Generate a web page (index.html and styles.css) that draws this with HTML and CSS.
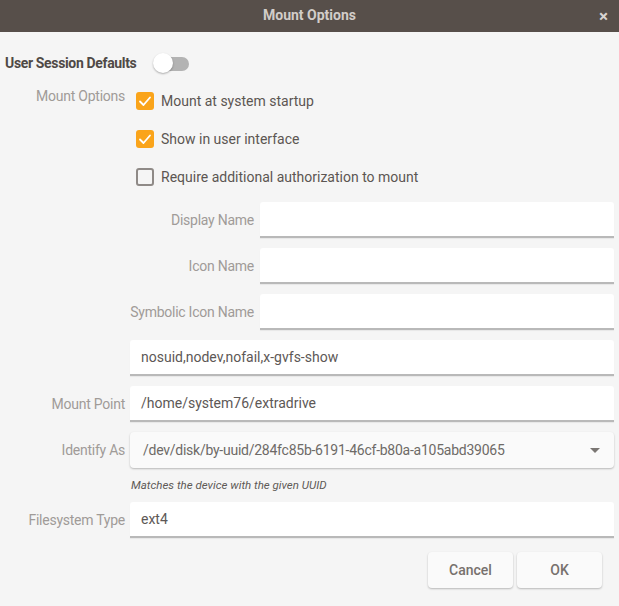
FILE: index.html
```html
<!DOCTYPE html>
<html>
<head>
<meta charset="utf-8">
<link rel="stylesheet" href="styles.css">
</head>
<body>
<div class="titlebar">
  <span class="title">Mount Options</span>
  <span class="close">×</span>
</div>
<div class="content">
  <div class="header">
    <span class="header-label">User Session Defaults</span>
    <span class="switch"><span class="knob"></span></span>
  </div>
  <div class="form">
    <div class="label label-top">Mount Options</div>
    <div class="checks">
      <div class="check-row"><span class="box on"><svg viewBox="0 0 18 18" width="18" height="18"><polyline points="4,9.5 7.5,13 14,5.5" fill="none" stroke="#fff" stroke-width="1.8" stroke-linecap="round" stroke-linejoin="round"/></svg></span><span class="check-text">Mount at system startup</span></div>
      <div class="check-row"><span class="box on"><svg viewBox="0 0 18 18" width="18" height="18"><polyline points="4,9.5 7.5,13 14,5.5" fill="none" stroke="#fff" stroke-width="1.8" stroke-linecap="round" stroke-linejoin="round"/></svg></span><span class="check-text">Show in user interface</span></div>
      <div class="check-row"><span class="box"></span><span class="check-text">Require additional authorization to mount</span></div>
      <div class="sub">
        <div class="label">Display Name</div><div class="field"></div>
        <div class="label">Icon Name</div><div class="field"></div>
        <div class="label">Symbolic Icon Name</div><div class="field"></div>
      </div>
    </div>
    <div class="label"></div><div class="field">nosuid,nodev,nofail,x-gvfs-show</div>
    <div class="label">Mount Point</div><div class="field">/home/system76/extradrive</div>
    <div class="label">Identify As</div>
    <div class="combo-wrap">
      <div class="combo"><span class="combo-text">/dev/disk/by-uuid/284fc85b-6191-46cf-b80a-a105abd39065</span><span class="arrow"></span></div>
      <div class="hint">Matches the device with the given UUID</div>
    </div>
    <div class="label">Filesystem Type</div><div class="field">ext4</div>
  </div>
  <div class="buttons">
    <button class="btn">Cancel</button>
    <button class="btn">OK</button>
  </div>
</div>
</body>
</html>
```
FILE: styles.css
```css
html, body {
  margin: 0;
  padding: 0;
}
body {
  background: #f5f5f5;
  font-family: Roboto, "Noto Sans", sans-serif;
  font-size: 14px;
  color: #5c5652;
  width: 619px;
  height: 606px;
  overflow: hidden;
}
.titlebar {
  height: 32px;
  background: #574f4a;
  display: flex;
  align-items: center;
  justify-content: center;
  position: relative;
}
.title {
  color: #d2cdc9;
  font-weight: 700;
  font-size: 14px;
  margin-top: -2px;
}
.close {
  position: absolute;
  right: 11px;
  top: 6px;
  color: #d8d4d1;
  font-size: 17px;
  font-weight: 700;
  line-height: 20px;
}
.content {
  padding: 0 5px;
}
.header {
  display: flex;
  align-items: center;
  height: 24px;
  margin-top: 19px;
}
.header-label {
  font-weight: 700;
  color: #4f4946;
  font-size: 14px;
  width: 148px;
  letter-spacing: -0.35px;
}
.switch {
  position: relative;
  width: 29px;
  height: 14px;
  border-radius: 7px;
  background: #b3b3b3;
  margin-left: 7px;
  margin-top: 2px;
}
.knob {
  position: absolute;
  left: -7px;
  top: -4px;
  width: 20px;
  height: 20px;
  border-radius: 50%;
  background: #fff;
  box-shadow: 0 1px 2px rgba(0,0,0,0.3);
}
.form {
  display: grid;
  grid-template-columns: 120px 1fr;
  column-gap: 5px;
  row-gap: 10px;
  margin-top: 14px;
}
.label {
  color: #a09b98;
  text-align: right;
  display: flex;
  align-items: center;
  justify-content: flex-end;
  height: 36px;
  white-space: nowrap;
  letter-spacing: -0.25px;
}
.label-top {
  height: 24px;
  align-items: flex-start;
  margin-top: -1px;
}
.checks {
  display: flex;
  flex-direction: column;
}
.check-row {
  display: flex;
  align-items: center;
  height: 24px;
  margin-bottom: 14px;
  padding-left: 6px;
}
.check-row:nth-child(3) {
  margin-bottom: 13px;
}
.box {
  width: 18px;
  height: 18px;
  box-sizing: border-box;
  border: 2px solid #8f8a87;
  border-radius: 3px;
  margin-right: 7px;
  display: flex;
}
.box.on {
  border: none;
  background: #faa41a;
}
.check-text {
  color: #5c5652;
}
.sub {
  display: grid;
  grid-template-columns: 124px 1fr;
  column-gap: 6px;
  row-gap: 10px;
}
.field {
  height: 36px;
  box-sizing: border-box;
  background: #fff;
  border-bottom: 2px solid #b9b9b9;
  border-radius: 3px 3px 0 0;
  padding-left: 11px;
  display: flex;
  align-items: center;
  color: #5d5856;
  box-shadow: 0 1px 1px rgba(0,0,0,0.06);
}
.combo-wrap {
  display: flex;
  flex-direction: column;
}
.combo {
  height: 36px;
  box-sizing: border-box;
  background: #fafafa;
  border-radius: 4px;
  box-shadow: 0 1px 2px rgba(0,0,0,0.25);
  display: flex;
  align-items: center;
  justify-content: space-between;
  padding: 0 14px 0 13px;
  color: #6e6a67;
}
.combo-text {
  letter-spacing: -0.25px;
}
.arrow {
  width: 0;
  height: 0;
  border-left: 5px solid transparent;
  border-right: 5px solid transparent;
  border-top: 5px solid #7a7673;
}
.hint {
  font-size: 11.5px;
  font-style: italic;
  color: #5e5a57;
  padding-left: 1px;
  height: 24px;
  display: flex;
  align-items: center;
  margin-top: 5px;
  margin-bottom: -5px;
}
.buttons {
  display: flex;
  justify-content: flex-end;
  gap: 4px;
  margin-top: 14px;
  padding-right: 12px;
}
.btn {
  width: 85px;
  height: 36px;
  border: none;
  border-radius: 4px;
  background: #fafafa;
  box-shadow: 0 1px 2px rgba(0,0,0,0.25);
  font-family: Roboto, "Noto Sans", sans-serif;
  font-size: 14px;
  font-weight: 500;
  color: #77716d;
}
```
